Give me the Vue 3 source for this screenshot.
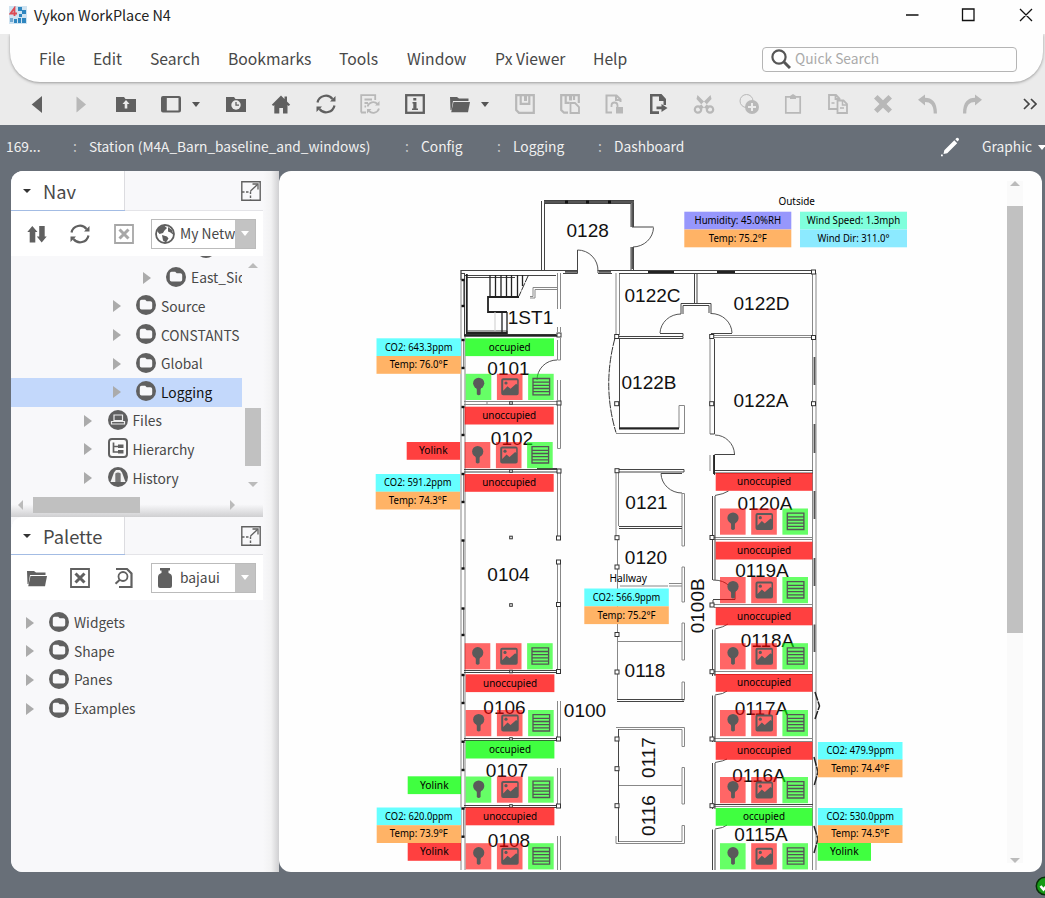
<script setup>
const icons = {
  back: '<path d="M4.7 10.500 15 2v17z"/>',
  forward: '<path d="M14 10.500 4.500 2.500v16z"/>',
  upFolder: '<path d="M0 3h8l1.500 2H20v13H0z"/><path d="m10 6 3.500 4h-2.200v4.500H8.700V10H6.500z" fill="#ebebeb"/>',
  layout: '<path fill-rule="evenodd" d="M2 2h16a2 2 0 0 1 2 2v12.500a2 2 0 0 1-2 2H2a2 2 0 0 1-2-2V4a2 2 0 0 1 2-2zm3.800 2v12.500h11.700V4z"/>',
  clockFolder: '<path d="M0 3h8l1.500 2H20v13H0z"/><circle cx="10" cy="11" r="4.700" fill="#ebebeb"/><path d="M10 8v3.200h3" fill="none" stroke="currentColor" stroke-width="1.300"/>',
  home: '<path d="m10 1.500 3.500 3.500V2.500H16V7.500l3.200 3.200-1.700 1.400L16.500 11v8.500H12V14H8.300v5.500h-5V11l-1 1L.8 10.700z"/>',
  refresh: '<g fill="none" stroke="currentColor" stroke-width="2.200"><path d="M1.500 8.500A8.500 8.500 0 0 1 16.500 5M18.500 11.500A8.500 8.500 0 0 1 3.500 15"/></g><path d="M19.500 2v5.500H14zM.5 18v-5.500H6z"/>',
  docRefresh: '<path d="M1.200 18.500V1.200h14V6M1 18.500h5M4.500 5.500H12M4.500 9H8M4.500 12.500H6" fill="none" stroke="currentColor" stroke-width="1.800"/><g fill="none" stroke="currentColor" stroke-width="1.800"><path d="M7.500 12.500a6 6 0 0 1 10-2.500M19 14.500a6 6 0 0 1-10 2.500"/></g><path d="M19.500 7v4.500H15zM7 19.500V15h4.500z"/>',
  info: '<rect x="1.200" y="1.200" width="17.600" height="17.600" fill="none" stroke="currentColor" stroke-width="2.300"/><path d="M8.300 4h3v2.600h-3zM7.500 8h4v6.500H13V16H7v-1.500h1.300v-5H7.500z"/>',
  openFolder: '<path d="M0 3h7L9 4.500h9.500V7H3L1.500 16H.5z"/><path d="M3.500 8H20L18 18.300H1.200z"/>',
  save: '<path d="M1.200 1.200h17.600v17.600H4L1.200 16zM5.700 1.500v8.300h8.600V1.500" fill="none" stroke="currentColor" stroke-width="2.200"/><path d="M9 2h3v5H9z"/>',
  saveCopy: '<path d="M8 18.700H4L1.200 16V1.200h17.600V9M5.700 1.500v7.300h4M14 1.500V6" fill="none" stroke="currentColor" stroke-width="2.200"/><path d="M9 2h3v4.500H9z"/><path d="M10.500 9H15l4 4v6h-8.500z" fill="none" stroke="currentColor" stroke-width="1.800"/>',
  docLock: '<path d="M8 18.500H2.500v-17h10l4 4V8M12 1.500V6h4.500" fill="none" stroke="currentColor" stroke-width="2"/><path d="M7.500 13v-1.500a3 3 0 0 1 6 0V14" fill="none" stroke="currentColor" stroke-width="1.800"/><path d="M12 13h7v6.500h-7z"/>',
  docExport: '<path fill-rule="evenodd" d="M1 0h11.500L17 5v6h-2.500V7H10V2.500H3.500v14.800H10V20H1z"/><path d="M7.500 12.500h5V10l6 4-6 4v-2.700h-5z"/>',
  cut: '<g fill="none" stroke="currentColor" stroke-width="2.200"><circle cx="4" cy="15.500" r="3.200"/><circle cx="16" cy="15.500" r="3.200"/></g><path d="M3.500 1 2.500 5l8 9 3.500 1.500L15.500 13zM16.500 1l1 4-8 9L6 15.500 4.500 13z"/>',
  duplicate: '<circle cx="7.500" cy="7" r="6.500" fill="none" stroke="currentColor"/><circle cx="13" cy="13" r="7"/><path d="M13 9v8M9 13h8" stroke="#ebebeb" stroke-width="2"/>',
  paste: '<path d="M2.800 2.800h14.400v16H2.800z" fill="none" stroke="currentColor" stroke-width="1.700"/><path d="M7 2 10 0l3 2v3H7z"/>',
  copy: '<path d="M1 1h7l3.500 3.500V15H1zM7.500 1v4h4" fill="none" stroke="currentColor" stroke-width="1.800"/><path d="M9.500 6.500h6l3.500 3.500v9H9.500z" fill="#ebebeb" stroke="currentColor" stroke-width="1.800"/><path d="M14.500 7v4H19M3.500 9h3M12 14h4" fill="none" stroke="currentColor" stroke-width="1.500"/>',
  remove: '<path d="m4.500 1 5.500 5.300L15.500 1 19 4.500 13.500 10l5.500 5.500-3.500 3.500-5.500-5.300L4.500 19 1 15.500 6.500 10 1 4.500z"/>',
  undo: '<path d="M7 .5v3.300c7 0 12 4 12 15.700h-3.300C15.700 11 12.500 8 7 8v3.500L0 5.800z"/>',
  redo: '<path d="M13 .5v3.300C6 3.800 1 7.800 1 19.500h3.300C4.300 11 7.500 8 13 8v3.500l7-5.700z"/>',
  upDown: '<path d="m5.300 2 5.200 6H8.300v10.500H2.700V8H.3zM14.700 18.500l5-6h-2V2H12.200v10.500H9.800z"/>',
  closeBox: '<path d="M1 1h18v18H1z" fill="none" stroke="currentColor" stroke-width="1.800"/><path d="m5.500 5.500 9 9m0-9-9 9" stroke="currentColor" stroke-width="3"/>',
  docSearch: '<path d="M2 1h11l4.500 4.500V19H5" fill="none" stroke="currentColor" stroke-width="2.200"/><circle cx="9" cy="8.500" r="4.500" fill="none" stroke="currentColor" stroke-width="1.800"/><path d="m5.800 11.800-4.300 4" stroke="currentColor" stroke-width="2"/>',
  folder: '<circle cx="10" cy="10" r="10"/><path d="M3.800 6.800q0-2 1.800-2h3.600l1.500 1.400h3.700q1.800 0 1.800 1.800v4.800q0 1.800-1.800 1.800H5.600q-1.800 0-1.800-1.800z" fill="#f8f8fa"/>',
  files: '<circle cx="10" cy="10" r="10"/><path d="M6 5h8.500v5.500H6zM3.500 11.500h13V14h-13z" fill="none" stroke="#ececec" stroke-width="1.200"/>',
  hierarchy: '<rect x="1" y="1" width="18" height="18" rx="3" fill="#fafafa" stroke="currentColor" stroke-width="2"/><path d="M5.500 4.500v9.500H11M5.500 8.500H11" fill="none" stroke="currentColor" stroke-width="1.700"/><path d="M10 6.500h5.500v3.500H10zM10 12h5.500v3.500H10z"/>',
  history: '<circle cx="10" cy="10" r="10"/><path d="M8 3h4l2 2.500L17.500 15h-15L6 5.500z" fill="#f2f2f2"/><path d="M7.300 6.500q2.700-2 5.400 0V15H7.300z" fill="#777"/>',
  globe: '<circle cx="10" cy="10" r="9" fill="#fff" stroke="currentColor" stroke-width="1.800"/><path d="M2 7q2-5 7-5.500L12 4 9.500 6.500 8 9 4.500 10zM13 3l4 3 1.500 5-3-2.500-2.500-1zM7 11l5 1.500 1.500 2-2.500 4-3-2z"/>',
  jar: '<path d="M5 0h10v2.500h-1.500V5q3.500 1 3.500 4v9q0 2-2 2H5q-2 0-2-2V9q0-3 3.500-4V2.500H5z"/>',
  expand: '<path d="M.8.8h18.400v18.400H.8z" fill="none" stroke="currentColor" stroke-width="1.400"/><path d="M9.500 10 16.500 3.500" stroke="currentColor" stroke-width="1.300"/><path d="M11.500 3H17v5.500" fill="none" stroke="currentColor" stroke-width="1.300"/><path d="M1 11h8.500v8.500" fill="none" stroke="currentColor" stroke-width="1.400" stroke-dasharray="2.500 1.500"/>',
}

const menus = [['File', 54], ['Edit', 57], ['Search', 78], ['Bookmarks', 111], ['Tools', 68], ['Window', 88], ['Px Viewer', 98], ['Help', 40]]

const tools = [
  ['back', 1], ['forward', 0], ['upFolder', 1], ['layout', 1, 1], ['clockFolder', 1], ['home', 1], ['refresh', 1],
  ['docRefresh', 0], ['info', 1], ['openFolder', 1, 1], ['save', 0], ['saveCopy', 0], ['docLock', 0], ['docExport', 1],
  ['cut', 0], ['duplicate', 0], ['paste', 0], ['copy', 0], ['remove', 0], ['undo', 0], ['redo', 0],
]

const crumbs = [['169...', 'root'], ['Station (M4A_Barn_baseline_and_windows)', 'station'], ['Config', 'config'], ['Logging', 'logging'], ['Dashboard', 'dash']]

const navRows = [
  { t: '', d: 4, i: 'folder' },
  { t: 'East_Sid', d: 3, i: 'folder' },
  { t: 'Source', d: 2, i: 'folder' },
  { t: 'CONSTANTS', d: 2, i: 'folder' },
  { t: 'Global', d: 2, i: 'folder' },
  { t: 'Logging', d: 2, i: 'folder', on: true },
  { t: 'Files', d: 1, i: 'files' },
  { t: 'Hierarchy', d: 1, i: 'hierarchy' },
  { t: 'History', d: 1, i: 'history' },
]
const paletteRows = ['Widgets', 'Shape', 'Panes', 'Examples']

const rooms = [
  ['0128', 587.7, 237], ['1ST1', 530.5, 323.5], ['0101', 508.5, 375], ['0122C', 652.5, 301.5], ['0122D', 761.5, 309.5],
  ['0122B', 649, 389], ['0122A', 761, 406.5], ['0102', 512, 445], ['0104', 508.5, 581], ['0106', 504.5, 713.5],
  ['0107', 507, 776.5], ['0108', 509, 846.5], ['0100', 585, 716.5], ['0121', 646.5, 508.5], ['0120', 646, 564],
  ['0118', 645, 676.5], ['0120A', 765, 509.5], ['0119A', 762, 576.5], ['0118A', 767.5, 646.5], ['0117A', 761.5, 714.5],
  ['0116A', 759, 781.5], ['0115A', 761, 841],
  ['0100B', 704.3, 605.8, 1], ['0117', 654.5, 757.5, 1], ['0116', 654.5, 815.5, 1],
]

// x, y, width, kind, text, text width
const R = 'red', G = 'green'
const tags = [
  [465.3, 338.3, 88.7, G, 'occupied', 42], [464.7, 406.7, 89, R, 'unoccupied', 54], [464.7, 474, 89, R, 'unoccupied', 54],
  [465.7, 674.3, 88.7, R, 'unoccupied', 54], [465.7, 740.7, 88.7, G, 'occupied', 42], [465.7, 807.5, 88.7, R, 'unoccupied', 54],
  [715.7, 473, 96.7, R, 'unoccupied', 54], [715.7, 541.7, 96.7, R, 'unoccupied', 54], [715.7, 607.5, 96.7, R, 'unoccupied', 54],
  [715.7, 674, 96.7, R, 'unoccupied', 54], [715.7, 742, 96.7, R, 'unoccupied', 54], [715.7, 808, 96.7, G, 'occupied', 42],
  [406.7, 442, 53.3, R, 'Yolink', 28.5], [407.7, 776.3, 53.3, G, 'Yolink', 28.5], [407.7, 843, 53.3, R, 'Yolink', 28.5], [817.7, 843, 53.3, G, 'Yolink', 28.5],
  [376.5, 338.3, 84.3, 'cyan', 'CO2: 643.3ppm', 67.5], [376.5, 356, 84.3, 'orange', 'Temp: 76.0°F', 58],
  [375.7, 474, 84.3, 'cyan', 'CO2: 591.2ppm', 67.5], [375.7, 491.7, 84.3, 'orange', 'Temp: 74.3°F', 58],
  [376.7, 807.5, 84.3, 'cyan', 'CO2: 620.0ppm', 67.5], [376.7, 825.2, 84.3, 'orange', 'Temp: 73.9°F', 58],
  [817.9, 742, 84.6, 'cyan', 'CO2: 479.9ppm', 67.5], [817.9, 759.5, 84.6, 'orange', 'Temp: 74.4°F', 58],
  [817.9, 808, 84.6, 'cyan', 'CO2: 530.0ppm', 67.5], [817.9, 825.2, 84.6, 'orange', 'Temp: 74.5°F', 58],
  [584.3, 588.5, 84.5, 'cyan', 'CO2: 566.9ppm', 67.5], [584.3, 606.3, 84.5, 'orange', 'Temp: 75.2°F', 58],
  [684.3, 211.7, 107, 'violet', 'Humidity: 45.0%RH', 86.5], [684.3, 229.5, 107, 'orange', 'Temp: 75.2°F', 58],
  [800, 211.7, 107, 'mint', 'Wind Speed: 1.3mph', 93.5], [800, 229.5, 107, 'sky', 'Wind Dir: 311.0°', 72],
]

// x, y, light state
const controls = [
  [465.7, 373.8, G], [464.7, 442, R], [464.7, 643.2, R], [465.7, 710, R], [465.7, 776.5, G], [465.7, 843.2, R],
  [720, 508.5, R], [720, 577, R], [720, 643.2, R], [720, 710, R], [720, 777, R], [720, 843.2, G],
]

const posts = [
  [559, 335], [559, 403], [559, 471], [558.5, 538], [558.5, 562], [558.5, 604.5], [558.5, 671.5], [558.5, 739], [558.5, 806],
  [616.7, 336.5], [616.7, 403.7], [711.7, 336.5], [711.7, 403.7], [813.5, 272], [813.5, 337.5], [813.5, 403.7],
  [617, 470.7], [617, 537.7], [712, 537.5], [712, 605], [712, 671.7], [712, 739], [712, 805.7],
  [617, 672], [617, 739], [617, 768.7], [617, 805.7], [617, 567], [617, 634.5],
]
const marks = [[511, 403], [511, 471], [511, 537.5], [511, 605], [511, 671.5], [511, 739], [511, 806]]
const ticks = [280, 306, 340, 368, 407, 435, 474, 502, 540.5, 568.5, 608.5, 635, 675, 703, 741.7, 770, 808.5, 836.7]

const greyWalls = [
  'M461 270V870M465 336V870M557.500 273V309M560.500 273V309M557.500 327V332M560.500 327V332M557.500 340V360H560.500V338',
  'M463.500 280V306M463.500 340V368M463.500 407V435M463.500 474V502M463.500 540V568M463.500 608V635M463.500 675V703M463.500 742V770M463.500 808V837',
  'M557.500 380V400M560.500 380V448.500H557.500V405M557.500 473V536M560.500 473V536M557.500 564V602M560.500 564V602M557.500 607V669M560.500 607V669M557.500 701V737M560.500 701V737M557.500 768V804M560.500 768V804M557.500 836V870M560.500 836V870',
  'M616 273V335M619.500 273V335M812.500 273V870M816 273V870M558 287.500H533V296.500H530M558 289.500H535V298H530',
  'M616 433.500H684.500V405.500H679V428M710 339V434M616 473V536M618.500 473V526M682 493.500H684.500V546H682zM682 567H684.500V602H682zM682 623H684.500V660H682zM682 682H684.500V700H682z',
  'M669 583.500H682M669 586H682M620 586H668M617.500 540V700M617.500 641.500H682M464 401.500H557M464 404.500H557M487 402V404.500',
  'M616 727.500H684.500V746.500H682V729.500H618.500M682 767.500H684.500V804H682zM682 825.500H684.500V843.500H616V836M682 825.500V841.500H618.500M619 785.500H682',
  'M714 537.500H813M714 539.500H813M714 604.500H813M714 607.500H813M714 671.500H813M714 674.500H813M714 738.500H813M714 741.500H813M714 806.500H813M714 335.500H812M714 337.500H812M710 455V471',
]
const darkWalls = [
  'M541.500 270V201M544.500 270V203M544 200.500H634M544 203.500H631M631 203V227M633.500 200V227M631 247V270M633.500 247V270',
  'M461 270.500H577.500M461 273.500H465M563 273.500H577.500V270M598 270.500H816M598 273.500H612M598 270V273M619 273.500H813M461 270V280',
  'M694.500 273V303M697 273V303M464 275.500H556M467 277.500H515M464.500 274V336H560M464 334.500H556M467.500 331H507V334M714.500 339V434M710 434H714.500',
  'M681 314V303.500H711V314M683 314V305.500H709V313M619 336.500H683V338.500H619M660 333.500H683V336M711 333.500H732M619.500 338.500V428H679M714.500 454.500H735M714.500 455V475M714 470.500H813M714 473H813M617 469.500H684V472H619',
  'M619 526.500H682M619 528.500H682M661 473.500H682M464 469.500H557M464 472H557M464 670.500H557M464 672.500H557M464 738.500H557M464 740.500H557M464 805.500H557M464 807.500H557M537 468.500H557',
  'M617 699.500H684M617 701.500H684M618.500 729V842M713 599.500H735V590M577.500 250V271M632 227H653.500M714 804.500H813',
  'M712.500 496V580M715 496V580M712.500 629.500V676M715 629.500V676M712.500 695.500V742M715 695.500V742M712.500 763V809M715 763V809M712.500 829.500V870M715 829.500V870M713 600V607',
]
const heavyWalls = [
  'M466.800 274V333H507M519 297H488V312H507M464 335.500H558M619 428.500H679M648 272H674M717 272H735',
  'M714 455V474',
]
const windows = [
  'M544 202H634M632.300 201V227M632.300 247V269M565 271.800H577M599 271.800H611',
  'M814.500 357V385M814.500 424V453M814.500 491V519M814.500 558V586M814.500 624.500V652',
]
const stairs = 'M490 275V297M495.500 275V297M501 275V297M506.500 275V297M511.500 275V297M517.500 275V297M522.500 275V286M507 312V334M502 312V334'
const arcs = [
  'M577.500 250A20.500 20.500 0 0 1 598 271', 'M653.500 227.500A21 20 0 0 1 633 247', 'M557 360A20 20 0 0 0 537 380',
  'M681 314A21 20 0 0 0 660 333', 'M711 313.500A21 20 0 0 1 732 333', 'M715 435A20 20 0 0 1 734.500 454', 'M661 473.500A21 20 0 0 0 682 493',
  'M715 495.500Q724 494 728.500 491', 'M713 580Q724 580 729 586', 'M715 629Q724 627 728 624', 'M715 695Q724 694 727 691', 'M715 762.500Q724 761 727 759', 'M715 829Q724 828 727 825',
]
</script>

<template>
  <div class="app">
    <header class="titlebar">
      <svg class="logo" viewBox="0 0 18 18">
        <path d="M0 0h18v18H0z" fill="#cfe3f1" />
        <path d="M9 1h4v4H9zM13 4h4v4h-4zM10 8h3v3h-3zM13 12h4v5h-4zM9 12h3v5H9zM5 13h3v4H5z" fill="#2f86bf" />
        <path d="M5.500 10V2L1.500 7.500H8" fill="none" stroke="#dc4b55" stroke-width="1.800" />
        <path d="M1 12h3v4H1z" fill="#71a9d2" />
      </svg>
      <span class="title">Vykon WorkPlace N4</span>
      <svg class="winbtns" viewBox="0 0 127 16" fill="none" stroke="#111" stroke-width="1.300">
        <path d="M0 8h12.500M56.500 2h11.500v11.500H56.500zM114 2l12 12m0-12-12 12" />
      </svg>
    </header>

    <div class="menuwrap">
      <nav class="menubar">
        <span v-for="m in menus" :key="m[0]" class="menu" :style="{ width: m[1] + 'px' }">{{ m[0] }}</span>
        <div class="search">
          <svg viewBox="0 0 20 20" fill="none" stroke="#555"><circle cx="8" cy="8" r="6.600" stroke-width="2.200" /><path d="m13 13 6 6" stroke-width="3" /></svg>
          <span>Quick Search</span>
        </div>
      </nav>
    </div>

    <div class="toolbar">
      <div v-for="t in tools" :key="t[0]" class="tool" :class="{ off: !t[1], drop: t[2] }">
        <svg class="ic" viewBox="0 0 20 20" v-html="icons[t[0]]" />
        <i v-if="t[2]" class="caret" />
      </div>
      <svg class="more" viewBox="0 0 14 12" fill="none" stroke="#444" stroke-width="1.700"><path d="m1 1 5 5-5 5M8 1l5 5-5 5" /></svg>
    </div>

    <div class="pathbar">
      <template v-for="(c, n) in crumbs" :key="c[1]">
        <span v-if="n" class="sep">:</span>
        <span class="crumb" :class="c[1]">{{ c[0] }}</span>
      </template>
      <svg class="pencil" viewBox="0 0 20 20"><path d="m4.300 13.300 10-10 2.900 2.900-10 10-3.700.8zM15.300 2.300l1.200-1.200q1-.8 2 .2t.2 2l-1.200 1.200zM1 17.500h1.800v1.700H1z" fill="#fff" /></svg>
      <span class="view">Graphic</span><i class="caret light" />
    </div>

    <main class="body">
      <aside class="side">
        <section class="pane nav">
          <div class="head"><div class="tab"><i class="caret" /><span>Nav</span></div><svg class="ic expand" viewBox="0 0 20 20" v-html="icons.expand" /></div>
          <div class="tools">
            <svg class="ic" viewBox="0 0 20 20" v-html="icons.upDown" />
            <svg class="ic" viewBox="0 0 20 20" v-html="icons.refresh" />
            <svg class="ic faded" viewBox="0 0 20 20" v-html="icons.closeBox" />
            <div class="combo"><svg class="ic" viewBox="0 0 20 20" v-html="icons.globe" /><span>My Netw</span><b><i class="caret light" /></b></div>
          </div>
          <div class="treebox">
            <div class="tree">
              <div v-for="(r, n) in navRows" :key="n" class="row" :class="['d' + r.d, { on: r.on }]">
                <i class="arrow" /><svg class="ic" viewBox="0 0 20 20" v-html="icons[r.i]" /><span>{{ r.t }}</span>
              </div>
            </div>
            <div class="vbar"><i class="up" /><div class="thumb" /><i class="down" /></div>
          </div>
          <div class="hbar"><i class="left" /><div class="thumb" /><i class="right" /></div>
        </section>
        <section class="pane palette">
          <div class="head"><div class="tab"><i class="caret" /><span>Palette</span></div><svg class="ic expand" viewBox="0 0 20 20" v-html="icons.expand" /></div>
          <div class="tools">
            <svg class="ic" viewBox="0 0 20 20" v-html="icons.openFolder" />
            <svg class="ic" viewBox="0 0 20 20" v-html="icons.closeBox" />
            <svg class="ic" viewBox="0 0 20 20" v-html="icons.docSearch" />
            <div class="combo"><svg class="ic" viewBox="0 0 20 20" v-html="icons.jar" /><span>bajaui</span><b><i class="caret light" /></b></div>
          </div>
          <div class="list">
            <div v-for="p in paletteRows" :key="p" class="row d0">
              <i class="arrow" /><svg class="ic" viewBox="0 0 20 20" v-html="icons.folder" /><span>{{ p }}</span>
            </div>
          </div>
        </section>
      </aside>

      <section class="view-pane">
        <svg class="plan" viewBox="279 171 728 699" width="728" height="699">
          <g fill="none">
            <path v-for="w in greyWalls" :key="w" :d="w" stroke="#888" />
            <path v-for="w in darkWalls" :key="w" :d="w" stroke="#444" />
            <path v-for="w in heavyWalls" :key="w" :d="w" stroke="#222" stroke-width="1.800" />
            <path v-for="w in windows" :key="w" :d="w" stroke="#555" stroke-width="1.800" />
            <path d="M565 202H568M586 202H589M608 202H611" stroke="#111" stroke-width="3" />
            <path :d="stairs" stroke="#222" stroke-width="1.300" />
            <path v-for="a in arcs" :key="a" :d="a" stroke="#555" />
            <path d="M495 312V331" stroke="#ccc" />
            <path d="M528.500 275 519 296M615 338Q602 386 616 432.500" stroke="#333" stroke-dasharray="8 1" />
            <path d="M815 692 819.500 706 815 719M814 757 818 772 814 786M814 826 818 839 814 853" stroke="#222" stroke-width="1.500" stroke-dasharray="9 1" />
          </g>
          <g fill="#111"><rect v-for="t in ticks" :key="t" x="461.500" :y="t - 1.200" width="3" height="2.400" /></g>
          <g fill="#fff" stroke="#333">
            <rect v-for="(p, n) in posts" :key="n" :x="p[0] - 2" :y="p[1] - 2" width="4" height="4" />
            <rect v-for="(p, n) in marks" :key="'m' + n" :x="p[0] - 1.300" :y="p[1] - 1.300" width="2.600" height="2.600" />
          </g>
          <text v-for="r in rooms" :key="r[0] + r[2]" class="room" :x="r[3] ? 0 : r[1]" :y="r[3] ? 0 : r[2]" :transform="r[3] ? `translate(${r[1]} ${r[2]}) rotate(-90)` : null">{{ r[0] }}</text>

          <g v-for="(c, n) in controls" :key="n" :transform="`translate(${c[0]} ${c[1]})`">
            <rect width="25.600" height="26.200" :class="'c-' + c[2]" />
            <rect x="31.200" width="25.600" height="26.200" class="c-red" />
            <rect x="62.400" width="25.600" height="26.200" class="c-green" />
            <g fill="#5a5a5a">
              <circle cx="13" cy="9.500" r="5.600" /><path d="M10.300 13h5.400l-.8 3v4.500q-1.900 2-3.800 0V16z" />
              <path fill-rule="evenodd" d="M37.500 4.500h13.500q2 0 2 2v13q0 2-2 2H37.500q-2 0-2-2v-13q0-2 2-2zM37.500 6.500v10.500l4.300-4.500 3 2.500 5.700-5 1 1V6.500z" />
              <circle cx="40.300" cy="9.200" r="1.600" />
            </g>
            <path d="M67.300 4.700h16.600v16.300H67.300zM67.300 8.300h16.600M67.300 11.500h16.600M67.300 14.700h16.600M67.300 17.900h16.600" fill="none" stroke="#555" stroke-width="1.300" />
          </g>

          <g v-for="(t, n) in tags" :key="n">
            <rect :x="t[0]" :y="t[1]" :width="t[2]" height="17.800" :class="'t-' + t[3]" />
            <text class="tag" :x="t[0] + t[2] / 2" :y="t[1] + 12.200" :textLength="t[5]" lengthAdjust="spacingAndGlyphs">{{ t[4] }}</text>
          </g>
          <text class="tag" x="796.700" y="205" textLength="36.500" lengthAdjust="spacingAndGlyphs">Outside</text>
          <text class="tag" x="628.300" y="582" textLength="37.500" lengthAdjust="spacingAndGlyphs">Hallway</text>
        </svg>
        <div class="vbar big"><i class="up" /><div class="thumb" /><i class="down" /></div>
      </section>
    </main>

    <footer class="status">
      <svg class="ok" viewBox="0 0 20 20"><circle cx="10" cy="10" r="8.700" fill="#169a16" stroke="#082d08" stroke-width="1.500" /><path d="m5.500 10 3 3.500 6-7" fill="none" stroke="#fff" stroke-width="2.600" /></svg>
    </footer>
  </div>
</template>

<style>
body { margin: 0; overflow: hidden; background: #686f78; }
</style>

<style scoped>
* { box-sizing: border-box; }
.app { width: 1045px; height: 898px; overflow: hidden; display: flex; flex-direction: column; background: #686f78; color: #484848; font-family: "Noto Sans CJK SC", "Open Sans", sans-serif; font-size: 13.800px; line-height: 1; white-space: nowrap; }
.ic { width: 20px; height: 20px; fill: currentColor; color: #606060; flex: none; display: block; overflow: visible; }
.caret { width: 0; height: 0; flex: none; border: 4.500px solid transparent; border-top: 5px solid #555; border-bottom: 0; }
.caret.light { border-top-color: #fff; }

.titlebar { height: 34px; flex: none; background: #fefefe; display: flex; align-items: center; padding: 0 12px 4px 9px; }
.logo { width: 18px; height: 18px; }
.title { margin-left: 7px; font-size: 14.400px; color: #222; flex: 1; }
.winbtns { width: 127px; height: 16px; }

.menuwrap { height: 48px; flex: none; background: #ebebeb; padding: 0 2px 0 10px; }
.menubar { height: 48px; background: #fefefe; border-radius: 0 0 30px 30px; box-shadow: 0 1px 3px #999; clip-path: inset(0 -5px -6px -5px); display: flex; align-items: center; padding: 2px 26px 0 29px; }
.menu { font-size: 15.700px; flex: none; }
.search { margin-left: auto; width: 255px; height: 25px; border: 1px solid #b5b5b5; border-radius: 4px; display: flex; align-items: center; padding: 0 8px; gap: 4px; color: #aaa; font-size: 13.800px; line-height: 20px; }
.search span { padding-bottom: 2px; }
.search svg { width: 20px; height: 20px; }

.toolbar { height: 43px; flex: none; background: #ebebeb; display: flex; align-items: center; padding-left: 14.600px; padding-top: 1px; }
.tool { width: 44.750px; flex: none; display: flex; align-items: center; padding-left: 12.300px; }
.tool.drop { width: 65px; gap: 11px; }
.tool.off .ic { color: #b8b8b8; }
.more { width: 14px; height: 12px; margin-left: 28px; }

.pathbar { height: 46px; flex: none; display: flex; align-items: center; padding: 0 0 2px 6px; color: #f1f1f1; font-size: 13.800px; overflow: hidden; }
.crumb { flex: none; }
.sep { width: 16px; flex: none; color: #c8c8c8; }
.root { width: 67px; }
.station { width: 316px; font-size: 13.700px; }
.config { width: 76px; }
.logging { width: 85px; }
.dash { width: 326px; }
.pencil { width: 20px; height: 20px; flex: none; }
.view { margin-left: 22px; width: 56px; flex: none; }

.body { height: 701px; flex: none; display: flex; padding-left: 11px; }
.side { width: 268px; flex: none; height: 701px; border-radius: 12px 0 0 12px; overflow: hidden; background: linear-gradient(90deg, #f8f8fa 0 252px, #f2f2f3 260px, #d0d0d2 268px); padding-right: 16px; display: flex; flex-direction: column; }
.pane { display: flex; flex-direction: column; background: #f8f8fa; }
.nav { height: 346px; flex: none; }
.palette { flex: 1; border-radius: 12px 0 0 0; }
.head { height: 40px; flex: none; display: flex; align-items: center; justify-content: space-between; padding-right: 2px; border-bottom: 1px solid #e4e4e8; }
.palette .head { height: 38px; }
.tab { width: 114px; height: 100%; background: #fff; border-right: 1px solid #dcdce0; box-shadow: 0 1px #a3bce4; display: flex; align-items: center; font-size: 18.300px; padding: 0 0 0 12px; gap: 12px; border-radius: 12px 0 0 0; }
.tab .caret { border-width: 4px 4px 0; border-top-color: #333; }
.tab span { line-height: 26px; }
.tools { height: 45px; flex: none; background: #fff; display: flex; align-items: center; padding-left: 15.500px; gap: 23.500px; }
.faded { opacity: .55; }
.combo { width: 105px; height: 30px; margin-left: -6px; border: 1px solid #bbb; display: flex; align-items: center; background: #fff; padding-left: 3px; }
.combo span { width: 55px; margin: 0 0 0 5px; padding-bottom: 1px; line-height: 20px; flex: none; }
.combo b { flex: 1; align-self: stretch; background: #c3c3c3; display: flex; align-items: center; justify-content: center; }

.treebox { height: 240px; flex: none; display: flex; overflow: hidden; }
.tree { width: 231px; overflow: hidden; }
.row { height: 28.600px; display: flex; align-items: center; }
.tree .row:first-child { margin-top: -21px; }
.row .ic { margin: 0 5px 2px 15.500px; }
.row span { line-height: 20px; padding-bottom: 1px; }
.d0 { padding-left: 14.500px; }
.d1 { padding-left: 73px; }
.d2 { padding-left: 101.500px; }
.d3 { padding-left: 131.500px; }
.d4 { padding-left: 161px; }
.d4 .arrow { visibility: hidden; }
.row.on { background: #c3d8fb; color: #111; }
.arrow { flex: none; border-left: 8px solid #ababab; border-top: 6.500px solid transparent; border-bottom: 6.500px solid transparent; }
.vbar { width: 16px; margin: 7px 0 9px 2.500px; display: flex; flex-direction: column; align-items: center; }
.up { border: 5px solid transparent; border-top: 0; border-bottom: 5.500px solid #bbb; }
.down { border: 5px solid transparent; border-bottom: 0; border-top: 5.500px solid #bbb; margin-top: auto; }
.vbar .thumb { width: 16px; height: 58px; background: #c1c1c1; margin-top: 140px; }
.hbar { height: 21px; display: flex; align-items: flex-start; background: linear-gradient(#f8f8fa 40%, #cfcfd1); }
.hbar .thumb { width: 107px; height: 16px; margin: 1px 0 0 10px; background: #c0c0c0; }
.left { border: 5px solid transparent; border-left: 0; border-right: 5px solid #bbb; margin: 4px 0 0 7px; }
.right { border: 5px solid transparent; border-right: 0; border-left: 5px solid #bbb; margin: 4px 0 0 90px; }
.list { padding-top: 8.500px; }

.view-pane { width: 763px; height: 701px; border-radius: 12px; background: #fefefe; overflow: hidden; display: flex; }
.plan { display: block; flex: none; }
.big { margin: 10px 0 9px; background: #fafafa; }
.big .thumb { height: 427px; margin-top: 20px; flex: none; }
.room { font: 19px "Liberation Sans", Arial, sans-serif; fill: #111; text-anchor: middle; }
.tag { font: 10px "Noto Sans", sans-serif; fill: #000; text-anchor: middle; }
.c-red { fill: rgba(255, 0, 0, .6); }
.c-green { fill: rgba(0, 255, 0, .6); }
.t-red { fill: rgba(255, 0, 0, .75); }
.t-green { fill: rgba(0, 255, 0, .75); }
.t-cyan { fill: #66ffff; }
.t-orange { fill: #ffb366; }
.t-violet { fill: #9797fc; }
.t-mint { fill: #80ffdc; }
.t-sky { fill: #8ceaff; }

.status { flex: 1; display: flex; justify-content: flex-end; overflow: hidden; padding-top: 4px; }
.ok { width: 20px; height: 20px; flex: none; margin-right: -10px; }
</style>
